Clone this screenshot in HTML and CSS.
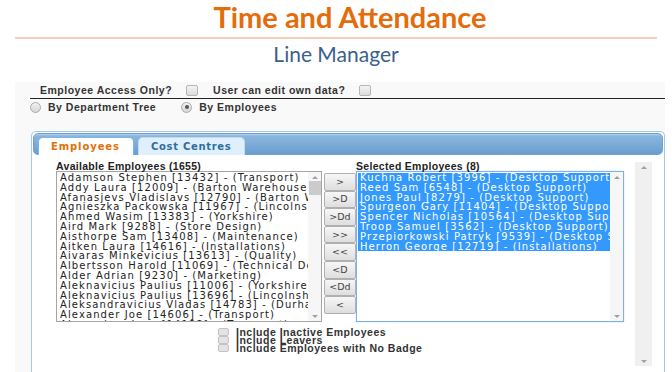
FILE: index.html
```html
<!DOCTYPE html>
<html lang="en">
<head>
    <meta charset="UTF-8">
    <title>Time and Attendance - Line Manager</title>
    <link rel="stylesheet" href="styles.css">
</head>
<body>
    <h1 class="title">Time and Attendance</h1>
    <div class="rule"></div>
    <h2 class="subtitle">Line Manager</h2>

    <div class="workspace">
        <div class="options">
            <span class="opt-label">Employee Access Only?</span>
            <span class="check"></span>
            <span class="opt-label">User can edit own data?</span>
            <span class="check"></span>
        </div>
        <div class="radios">
            <span class="radio"></span>
            <span class="opt-label">By Department Tree</span>
            <span class="radio checked"></span>
            <span class="opt-label">By Employees</span>
        </div>

        <div class="panel">
            <div class="tabs">
                <span class="tab active">Employees</span>
                <span class="tab">Cost Centres</span>
            </div>
            <div class="panel-body">
                <div class="picker">
                    <div class="col">
                        <div class="list-title">Available Employees (1655)</div>
                        <div class="listbox">
                            <div class="items">
                                <div class="row">Adamson Stephen [13432] - (Transport)</div>
                                <div class="row">Addy Laura [12009] - (Barton Warehouse)</div>
                                <div class="row">Afanasjevs Vladislavs [12790] - (Barton Warehouse)</div>
                                <div class="row">Agnieszka Packowska [11967] - (Lincolnshire)</div>
                                <div class="row">Ahmed Wasim [13383] - (Yorkshire)</div>
                                <div class="row">Aird Mark [9288] - (Store Design)</div>
                                <div class="row">Aisthorpe Sam [13408] - (Maintenance)</div>
                                <div class="row">Aitken Laura [14616] - (Installations)</div>
                                <div class="row">Aivaras Minkevicius [13613] - (Quality)</div>
                                <div class="row">Albertsson Harold [11069] - (Technical Design)</div>
                                <div class="row">Alder Adrian [9230] - (Marketing)</div>
                                <div class="row">Aleknavicius Paulius [11006] - (Yorkshire)</div>
                                <div class="row">Aleknavicius Paulius [13696] - (Lincolnshire)</div>
                                <div class="row">Aleksandravicius Vladas [14783] - (Durham)</div>
                                <div class="row">Alexander Joe [14606] - (Transport)</div>
                                <div class="row">Alexandrov Ivan [14122] - (Transport)</div>
                            </div>
                            <div class="scrollbar">
                                <span class="arrow up"></span>
                                <span class="thumb"></span>
                                <span class="arrow down"></span>
                            </div>
                        </div>
                    </div>

                    <div class="buttons">
                        <button class="move">&gt;</button>
                        <button class="move">&gt;D</button>
                        <button class="move">&gt;Dd</button>
                        <button class="move">&gt;&gt;</button>
                        <button class="move">&lt;&lt;</button>
                        <button class="move">&lt;D</button>
                        <button class="move">&lt;Dd</button>
                        <button class="move">&lt;</button>
                    </div>

                    <div class="col">
                        <div class="list-title">Selected Employees (8)</div>
                        <div class="listbox focused">
                            <div class="items">
                                <div class="row selected">Kuchna Robert [3996] - (Desktop Support)</div>
                                <div class="row selected">Reed Sam [6548] - (Desktop Support)</div>
                                <div class="row selected">Jones Paul [8279] - (Desktop Support)</div>
                                <div class="row selected">Spurgeon Gary [11404] - (Desktop Support)</div>
                                <div class="row selected">Spencer Nicholas [10564] - (Desktop Support)</div>
                                <div class="row selected">Troop Samuel [3562] - (Desktop Support)</div>
                                <div class="row selected">Przepiorkowski Patryk [9539] - (Desktop Support)</div>
                                <div class="row selected">Herron George [12719] - (Installations)</div>
                            </div>
                            <div class="scrollbar">
                                <span class="arrow up"></span>
                                <span class="arrow down"></span>
                            </div>
                        </div>
                    </div>

                    <div class="page-scroll">
                        <span class="arrow up"></span>
                        <span class="arrow down"></span>
                    </div>
                </div>

                <div class="filters">
                    <div class="filter"><span class="small-check"></span>Include Inactive Employees</div>
                    <div class="filter"><span class="small-check"></span>Include Leavers</div>
                    <div class="filter"><span class="small-check"></span>Include Employees with No Badge</div>
                </div>
            </div>
        </div>
    </div>
</body>
</html>
```

FILE: styles.css
```css
body {
    margin: 0;
    background-color: #fff;
    font-family: "Liberation Sans", Arial, sans-serif;
    overflow: hidden;
}

.title {
    margin: 0;
    padding-left: 28px;
    text-align: center;
    font-family: Lato, sans-serif;
    font-size: 29px;
    font-weight: bold;
    line-height: 34px;
    color: #e46c0a;
}

.rule {
    height: 2px;
    margin: 3px 15px 0 15px;
    background-color: #fbcdbb;
}

.subtitle {
    margin: 3px 0 0 0;
    text-align: center;
    font-family: Lato, sans-serif;
    font-size: 21px;
    font-weight: normal;
    line-height: 24px;
    color: #3b5f8e;
}

.workspace {
    margin: 16px 7px 0 15px;
    padding-left: 15px;
    background-color: #f9f9f9;
    height: 290px;
}

.opt-label {
    font-size: 10.5px;
    font-weight: bold;
    letter-spacing: 0.5px;
    color: #333;
}

.options {
    display: flex;
    align-items: center;
    height: 16px;
    padding-left: 10px;
    border-bottom: 1px solid #222;
}

.check {
    width: 10px;
    height: 9px;
    margin: 0 15px 0 14px;
    border: 1px solid #b5b5b5;
    border-radius: 2px;
    background: linear-gradient(#f4f4f4, #dcdcdc);
}

.radios {
    display: flex;
    align-items: center;
    height: 16px;
}

.radio {
    width: 9px;
    height: 9px;
    margin-right: 7px;
    border: 1px solid #aaa;
    border-radius: 50%;
    background: linear-gradient(#f2f2f2, #d6d6d6);
    position: relative;
}

.radio + .opt-label {
    margin-right: 25px;
}

.radio.checked::after {
    content: "";
    position: absolute;
    left: 2.5px;
    top: 2.5px;
    width: 4px;
    height: 4px;
    border-radius: 50%;
    background-color: #555;
}

/* tabs panel */
.panel {
    margin: 16px 0 0 1px;
    padding: 1px;
    border: 1px solid #a6c9e2;
    border-bottom: none;
    border-radius: 5px 5px 0 0;
    background-color: #fff;
    height: 250px;
}

.tabs {
    display: flex;
    align-items: flex-end;
    gap: 4px;
    height: 22px;
    padding: 0 4px;
    box-sizing: border-box;
    border: 1px solid #6ea2d2;
    border-radius: 5px;
    background: linear-gradient(#b4d1ec 0, #8ab6de 10%, #6a9fd0 100%);
}

.tab {
    height: 17px;
    margin-bottom: -1px;
    padding: 0 12px;
    border: 1px solid #c5dbec;
    border-bottom: none;
    border-radius: 5px 5px 0 0;
    background-color: #dfeffc;
    font-family: "DejaVu Sans", sans-serif;
    font-size: 10px;
    font-weight: bold;
    letter-spacing: 0.7px;
    line-height: 18px;
    color: #2e6e9e;
}

.tab.active {
    width: 70px;
    background-color: #fff;
    border-color: #79b7e7;
    color: #e17009;
    letter-spacing: 0.9px;
}

.panel-body {
    padding: 7px 0 0 23px;
}

.picker {
    display: flex;
    align-items: flex-start;
}

.list-title {
    font-size: 10.5px;
    font-weight: bold;
    letter-spacing: 0.3px;
    line-height: 9px;
    color: #222;
}

.listbox {
    display: flex;
    width: 266px;
    height: 151px;
    box-sizing: border-box;
    border: 1px solid #a5a5a5;
    background-color: #fff;
}

.listbox.focused {
    width: 268px;
    border-color: #80aee6;
    box-shadow: 0 0 1px #9cc0ee;
}

.items {
    flex: 1;
    overflow: hidden;
    padding: 1px 0 0 1px;
}

.row {
    padding-left: 2px;
    white-space: nowrap;
    font-family: "DejaVu Sans", sans-serif;
    font-size: 10px;
    letter-spacing: 1.1px;
    line-height: 9.8px;
    color: #222;
}

.row.selected {
    background-color: #3399fd;
    color: #fff;
}

.scrollbar {
    width: 13px;
    background-color: #f6f6f6;
    display: flex;
    flex-direction: column;
    align-items: center;
}

.thumb {
    width: 12px;
    height: 14px;
    margin-top: 2px;
    background-color: #cbcbcb;
}

.arrow {
    width: 0;
    height: 0;
    border-left: 3px solid transparent;
    border-right: 3px solid transparent;
}

.arrow.up {
    margin-top: 4px;
    border-bottom: 3px solid #a0a0a0;
}

.arrow.down {
    margin-top: auto;
    margin-bottom: 3px;
    border-top: 3px solid #a0a0a0;
}

.buttons {
    display: flex;
    flex-direction: column;
    margin: 11px 0 0 2px;
}

.move {
    width: 32px;
    height: 17.6px;
    padding: 0;
    border: 1px solid #b0b0b0;
    border-radius: 2px;
    background: linear-gradient(#f7f7f7, #dedede);
    font-family: "DejaVu Sans", sans-serif;
    font-size: 9.5px;
    line-height: 10px;
    color: #444;
}

/* frame scrollbar that runs down past the lists */
.page-scroll {
    display: flex;
    flex-direction: column;
    align-items: center;
    width: 17px;
    height: 204px;
    margin: 0 0 -44px 11px;
    background-color: #f0f0f0;
}

.filters {
    margin: 6px 0 0 162px;
}

.filter {
    display: flex;
    align-items: center;
    height: 8px;
    font-size: 10.5px;
    font-weight: bold;
    letter-spacing: 0.5px;
    line-height: 8px;
    color: #333;
}

.small-check {
    width: 9px;
    height: 6px;
    margin-right: 7px;
    border: 1px solid #c2c2c2;
    border-radius: 2px;
    background-color: #e3e3e3;
}
```
